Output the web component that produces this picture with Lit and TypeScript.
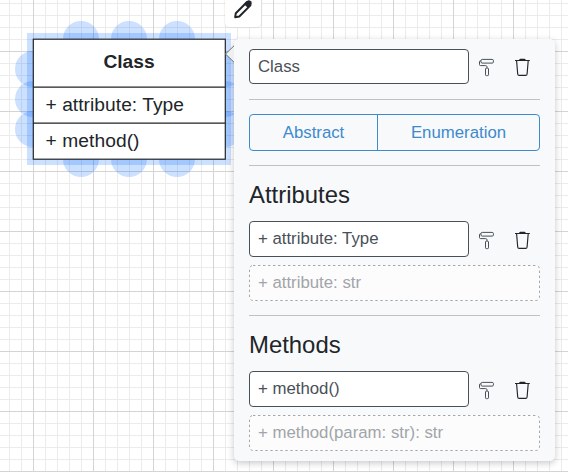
import { LitElement, html, css, svg } from "lit";
import { customElement, property } from "lit/decorators.js";

@customElement("uml-canvas")
class UmlCanvas extends LitElement {
  static styles = css`
    :host { display: block; position: absolute; inset: 0; }
    svg { display: block; width: 568px; height: 472px; font-family: "Liberation Sans", Arial, sans-serif; font-size: 19.2px; fill: #212529; }
    .minor { stroke: #ebebeb; stroke-width: 1; }
    .major { stroke: #d4d4d4; stroke-width: 1; }
    .halo { fill: none; stroke: #0064ff; stroke-opacity: 0.2; stroke-width: 6; }
    .handle { fill: #0064ff; fill-opacity: 0.2; }
    .box { fill: #fff; stroke: #212529; stroke-width: 1.2; }
    .name { font-weight: 700; text-anchor: middle; }
  `;

  private lines(test: (i: number) => boolean, cls: string) {
    const out = [];
    for (let i = -4; i < 46; i++) {
      if (!test(i)) continue;
      out.push(svg`<line class=${cls} x1=${33.5 + i * 12} x2=${33.5 + i * 12} y1="0" y2="472"></line>
        <line class=${cls} x1="0" x2="568" y1=${51.5 + i * 12} y2=${51.5 + i * 12}></line>`);
    }
    return out;
  }

  render() {
    return html`<svg viewBox="0 0 568 472">
      ${this.lines((i) => i % 5 !== 0, "minor")}
      ${this.lines((i) => i % 5 === 0, "major")}
      <rect class="halo" x="30" y="36" width="198" height="126"></rect>
      ${[81, 129, 177].map((x) => svg`<circle class="handle" cx=${x} cy="39" r="18"></circle><circle class="handle" cx=${x} cy="159" r="18"></circle>`)}
      ${[69, 99, 129].map((y) => svg`<circle class="handle" cx="33" cy=${y} r="18"></circle><circle class="handle" cx="225" cy=${y} r="18"></circle>`)}
      <rect class="box" x="33.3" y="39.2" width="192" height="120"></rect>
      <path class="box" d="M33 87.2H225M33 123.2H225"></path>
      <text class="name" x="129" y="68">Class</text>
      <text x="45.5" y="111" textLength="138.5">+ attribute: Type</text>
      <text x="45.5" y="147" textLength="94">+ method()</text>
    </svg>`;
  }
}

@customElement("row-actions")
class RowActions extends LitElement {
  static styles = css`
    :host { display: flex; align-items: flex-end; padding-bottom: 7px; }
    svg { display: block; fill: none; stroke: #495057; stroke-width: 1; stroke-linejoin: round; }
    .roller { margin-left: 9px; margin-right: 18px; }
    .trash { stroke: #212529; stroke-width: 1.15; }
  `;
  render() {
    return html`
      <svg class="roller" width="18" height="20" viewBox="0 0 18 20">
        <rect x="3" y="2.4" width="12.4" height="3.7" rx="1.2"></rect>
        <path d="M3 3.8H2.4Q1.5 3.8 1.5 4.8V7.5Q1.5 8.6 2.6 8.6H7.4Q9 8.6 9 9.8V11"></path>
        <rect x="7.5" y="11.2" width="3" height="7.4" rx=".8"></rect>
      </svg>
      <svg class="trash" width="18" height="20" viewBox="0 0 18 20">
        <path d="M1 3.5H15.8M5.4 3.4L6.2 2.3H10.6L11.4 3.4M2.6 3.8L3.7 17Q3.8 18.4 5.2 18.4H11.6Q13 18.4 13.1 17L14.2 3.8"></path>
      </svg>`;
  }
}

@customElement("member-field")
class MemberField extends LitElement {
  @property() value = "";
  @property({ type: Boolean }) draft = false;
  static styles = css`
    :host { display: flex; height: 36px; flex: none; }
    .field { box-sizing: border-box; width: 220px; height: 100%; border: 1px solid #495057; border-radius: 4px; background: #fff; color: #495057; padding: 0 8px; font-size: 16.8px; line-height: 33px; white-space: pre; }
    .draft { position: relative; width: 291px; border-color: transparent; background: #fcfcfc; color: #a1a5a9; }
    .outline { position: absolute; inset: -1px; fill: none; stroke: #a3a6aa; stroke-dasharray: 2.4 2.6; }
  `;
  render() {
    return this.draft
      ? html`<div class="field draft">${this.value}<svg class="outline" width="291" height="36"><rect x=".5" y=".5" width="290" height="35" rx="3.5"></rect></svg></div>`
      : html`<div class="field">${this.value}</div><row-actions></row-actions>`;
  }
}

@customElement("app-root")
class AppRoot extends LitElement {
  static styles = css`
    :host { display: block; position: relative; width: 568px; height: 472px; overflow: hidden; background: #fff; font-family: "Liberation Sans", Arial, sans-serif; }
    .tool { position: absolute; left: 225px; top: -9px; width: 36px; height: 36px; border-radius: 4px; background: #fff; box-shadow: 0 0 2px rgba(0,0,0,.18); }
    .pencil { position: absolute; left: 7px; top: 8px; }
    .panel { position: absolute; left: 234px; top: 39px; box-sizing: border-box; width: 321px; height: 422px; padding: 10px 15px; border-radius: 5px; background: #f8f9fb; box-shadow: 0 2px 7px rgba(0,0,0,.22); display: flex; flex-direction: column; }
    .arrow { position: absolute; left: 225px; top: 45px; }
    .title { height: 35px; margin-bottom: 1px; }
    hr { width: 291px; height: 1px; margin: 14px 0; border: 0; background: #bfc1c4; flex: none; }
    .group { display: grid; grid-template-columns: 127px 162px; box-sizing: border-box; width: 291px; height: 37px; border: 1px solid #3e8acc; border-radius: 4px; color: #3e8acc; font-size: 16.8px; line-height: 35px; text-align: center; flex: none; }
    .group span + span { border-left: 1px solid #3e8acc; }
    h2 { margin: 0; height: 41px; font-size: 23.9px; line-height: 29px; font-weight: 400; color: #212529; flex: none; }
    .gap { margin-top: 8px; }
  `;
  render() {
    return html`
      <uml-canvas></uml-canvas>
      <div class="tool"><svg class="pencil" width="22" height="22" viewBox="0 0 22 22">
        <path d="M3.2 18.2L3.8 14.2L15 3L18.4 6.4L7.3 17.5Z" fill="none" stroke="#212529" stroke-width="2" stroke-linejoin="round"></path>
        <path d="M11.8 5L15 1.9Q17 .6 18.9 2.2Q20.4 4 19.2 5.9L16 9.1Z" fill="#212529"></path>
      </svg></div>
      <div class="panel">
        <member-field class="title" value="Class"></member-field>
        <hr>
        <div class="group"><span>Abstract</span><span>Enumeration</span></div>
        <hr>
        <h2>Attributes</h2>
        <member-field value="+ attribute: Type"></member-field>
        <member-field class="gap" draft value="+ attribute: str"></member-field>
        <hr>
        <h2>Methods</h2>
        <member-field value="+ method()"></member-field>
        <member-field class="gap" draft value="+ method(param: str): str"></member-field>
      </div>
      <svg class="arrow" width="10" height="18" viewBox="0 0 10 18">
        <path d="M9 .8L.5 9L9 17.2" fill="#edeff1" stroke="#6c7177" stroke-width="1"></path>
      </svg>`;
  }
}
